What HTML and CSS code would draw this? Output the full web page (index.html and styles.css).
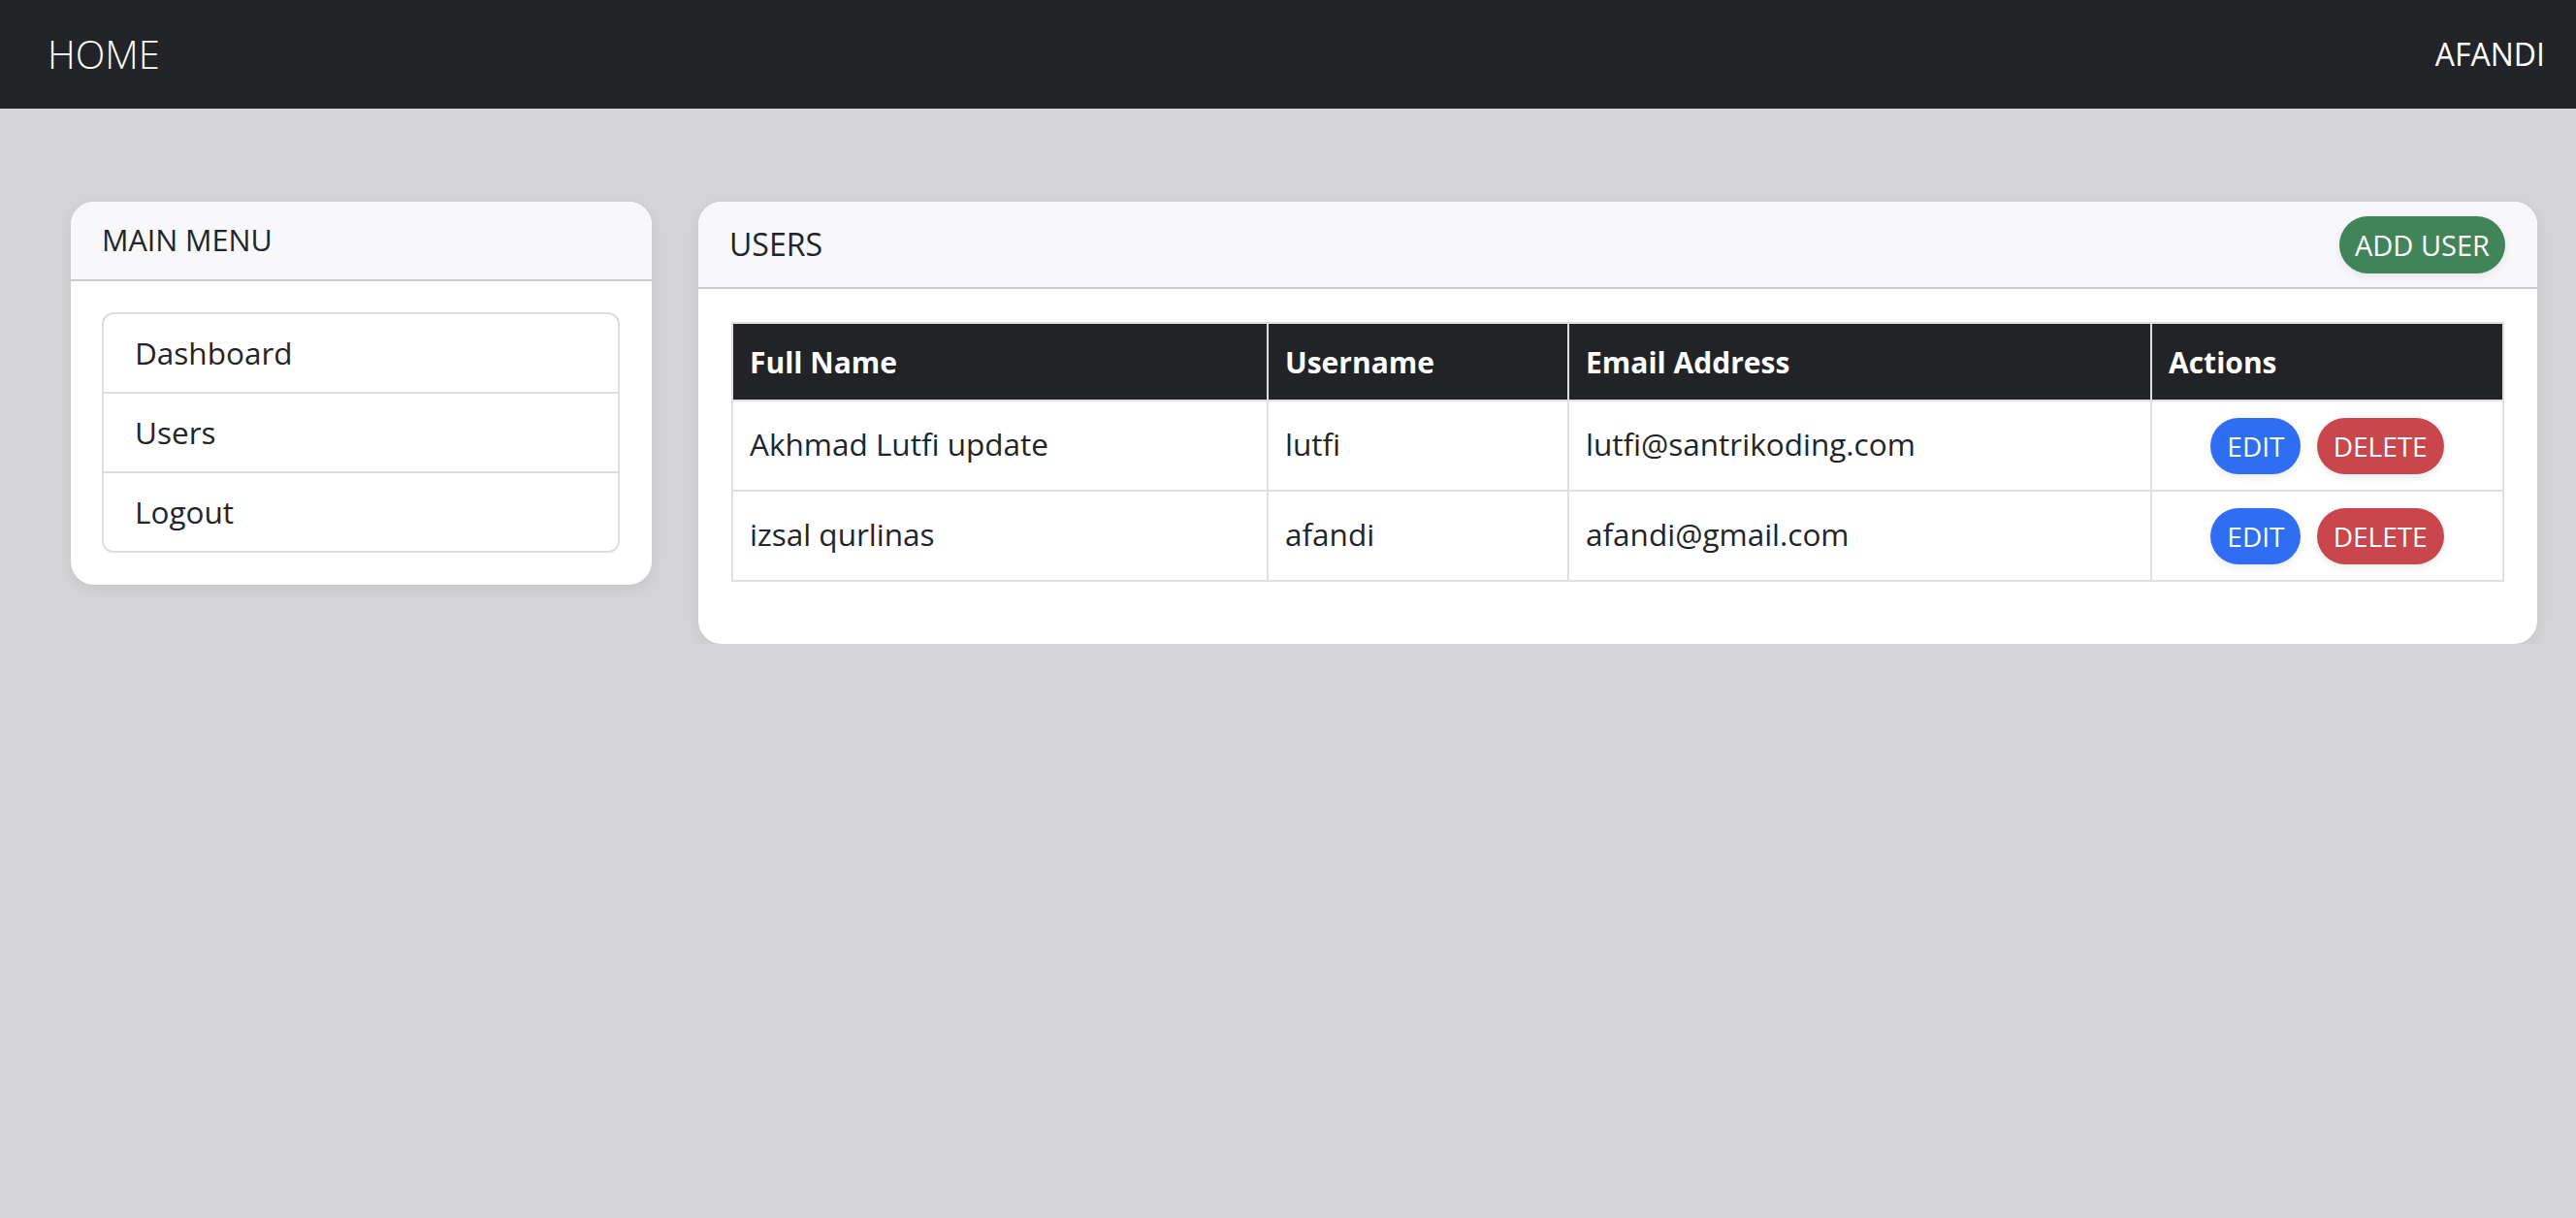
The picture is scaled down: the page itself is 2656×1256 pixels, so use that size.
FILE: index.html
```html
<!DOCTYPE html>
<html lang="en">

<head>
    <meta charset="UTF-8">
    <meta name="viewport" content="width=device-width, initial-scale=1.0">
    <title>Users</title>
    <link rel="stylesheet" href="styles.css">
</head>

<body>
    <nav class="navbar">
        <a class="brand" href="#">HOME</a>
        <span class="nav-user">AFANDI</span>
    </nav>

    <div class="page">
        <!-- sidebar menu -->
        <div class="card card-menu">
            <div class="card-header">MAIN MENU</div>
            <div class="card-body">
                <ul class="menu-list">
                    <li class="menu-item">Dashboard</li>
                    <li class="menu-item">Users</li>
                    <li class="menu-item">Logout</li>
                </ul>
            </div>
        </div>

        <!-- users table -->
        <div class="card card-users">
            <div class="card-header card-header-tall">
                <span>USERS</span>
                <button class="btn btn-green">ADD USER</button>
            </div>
            <div class="card-body card-body-table">
                <table class="user-table">
                    <colgroup>
                        <col class="col-name">
                        <col class="col-username">
                        <col class="col-email">
                        <col class="col-actions">
                    </colgroup>
                    <thead>
                        <tr>
                            <th>Full Name</th>
                            <th>Username</th>
                            <th>Email Address</th>
                            <th>Actions</th>
                        </tr>
                    </thead>
                    <tbody>
                        <tr>
                            <td>Akhmad Lutfi update</td>
                            <td>lutfi</td>
                            <td>lutfi@santrikoding.com</td>
                            <td class="actions">
                                <button class="btn btn-blue">EDIT</button>
                                <button class="btn btn-red">DELETE</button>
                            </td>
                        </tr>
                        <tr>
                            <td>izsal qurlinas</td>
                            <td>afandi</td>
                            <td>afandi@gmail.com</td>
                            <td class="actions">
                                <button class="btn btn-blue">EDIT</button>
                                <button class="btn btn-red">DELETE</button>
                            </td>
                        </tr>
                    </tbody>
                </table>
            </div>
        </div>
    </div>
</body>

</html>
```

FILE: styles.css
```css
body {
    margin: 0;
    background-color: #d4d3d6;
    font-family: "Open Sans", "Liberation Sans", sans-serif;
    color: #212529;
    line-height: 1.5;
}

.navbar {
    height: 112px;
    background-color: #232428;
    display: flex;
    align-items: center;
    justify-content: space-between;
    padding: 0 32px 0 49px;
}

.brand {
    color: #fff;
    text-decoration: none;
    font-size: 40px;
    font-weight: 300;
}

.nav-user {
    color: #fff;
    font-size: 32px;
}

.page {
    display: flex;
    align-items: flex-start;
    gap: 48px;
    padding: 96px 40px 0 73px;
}

.card {
    background: #fff;
    border-radius: 24px;
    box-shadow: 0 4px 14px rgba(0, 0, 0, 0.07);
    overflow: hidden;
}

.card-menu {
    width: 599px;
    flex: none;
}

.card-users {
    flex: 1;
}

.card-header {
    box-sizing: border-box;
    height: 82px;
    padding: 0 32px;
    display: flex;
    align-items: center;
    justify-content: space-between;
    background-color: #f8f7f9;
    border-bottom: 2px solid #cbcacd;
    font-size: 30.5px;
}

.card-header-tall {
    height: 90px;
    padding-right: 33px;
    font-size: 32px;
}

.card-body {
    padding: 32px 33px 33px 32px;
}

.card-body-table {
    padding: 34px 34px 64px 34px;
}

.menu-list {
    list-style: none;
    margin: 0;
    padding: 0;
    border: 2px solid #dddce1;
    border-radius: 12px;
}

.menu-item {
    height: 80px;
    display: flex;
    align-items: center;
    padding: 0 32px;
    font-size: 31.5px;
}

.menu-item + .menu-item {
    border-top: 2px solid #dddce1;
}

.user-table {
    width: 100%;
    border-collapse: collapse;
    table-layout: fixed;
    font-size: 31.5px;
}

.col-name {
    width: 552px;
}

.col-username {
    width: 310px;
}

.col-email {
    width: 601px;
}

.user-table th,
.user-table td {
    border: 2px solid #dfdfe2;
    padding: 0 17px;
    text-align: left;
    vertical-align: middle;
}

.user-table th {
    height: 78px;
    background-color: #212326;
    color: #fff;
    font-size: 30px;
    font-weight: 700;
}

.user-table td {
    height: 88px;
    padding-bottom: 3px;
}

.user-table td.actions {
    text-align: center;
    padding-bottom: 0;
}

.btn {
    border: none;
    border-radius: 30px;
    height: 58px;
    padding: 0 17px;
    font-family: inherit;
    font-size: 28px;
    color: #fff;
    cursor: pointer;
    box-shadow: 0 3px 8px rgba(0, 0, 0, 0.08);
    vertical-align: middle;
}

.btn-green {
    background-color: #41845a;
    height: 59px;
    padding: 0 16px;
    font-size: 29px;
}

.btn-blue {
    background-color: #2f6ef2;
}

.btn-red {
    background-color: #c8464c;
    margin-left: 8px;
}
```
